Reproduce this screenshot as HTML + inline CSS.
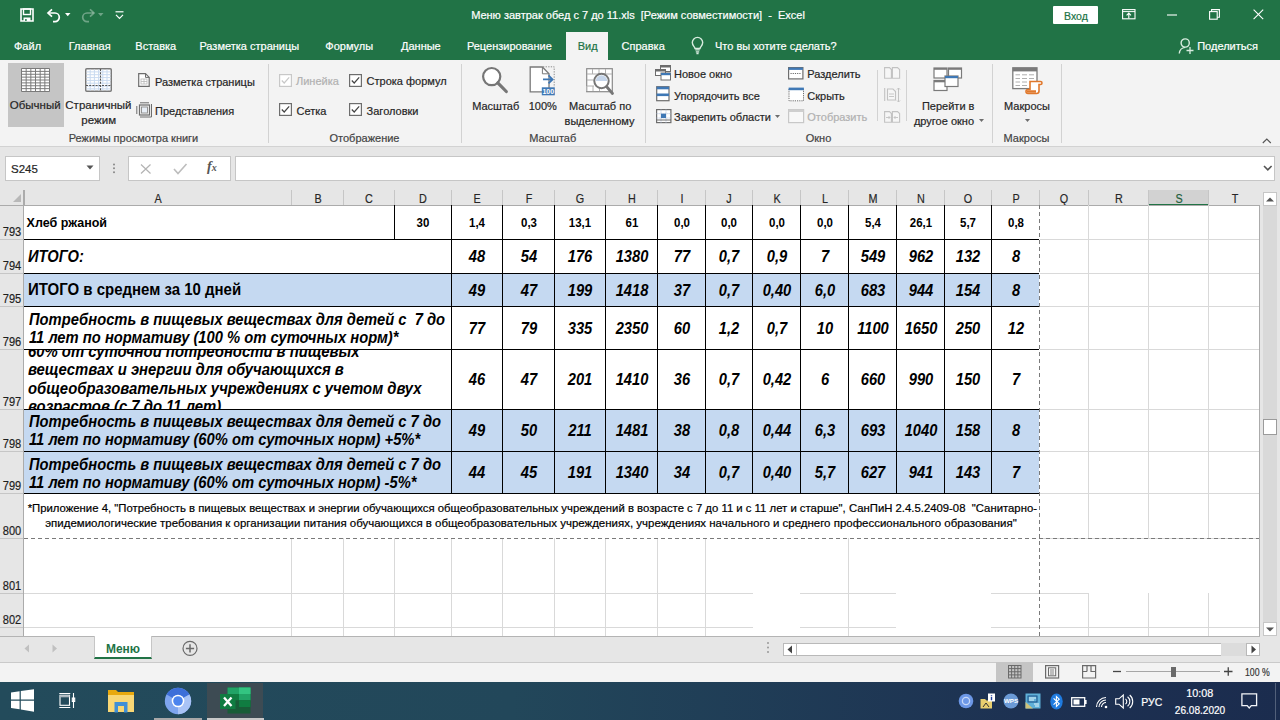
<!DOCTYPE html><html><head><meta charset="utf-8"><style>
html,body{margin:0;padding:0;width:1280px;height:720px;overflow:hidden;background:#fff;font-family:"Liberation Sans",sans-serif;}
div{box-sizing:border-box;}
.t{-webkit-text-stroke:0.2px currentColor}
.b{-webkit-text-stroke:0}
svg{position:absolute;overflow:visible}
</style></head><body>
<div style="position:absolute;left:0px;top:0px;width:1280px;height:60px;background:#217346"></div>
<div class="t" style="position:absolute;left:338px;width:600px;text-align:center;top:10.49px;font-size:11px;line-height:11px;color:#fff;font-weight:normal;font-style:normal;white-space:pre;">Меню завтрак обед с 7 до 11.xls  [Режим совместимости]  -  Excel</div>
<div class="t" style="position:absolute;left:14px;top:40.99px;font-size:11px;line-height:11px;color:#fff;font-weight:normal;font-style:normal;white-space:pre;">Файл</div>
<div class="t" style="position:absolute;left:68.75px;top:40.99px;font-size:11px;line-height:11px;color:#fff;font-weight:normal;font-style:normal;white-space:pre;">Главная</div>
<div class="t" style="position:absolute;left:135.3px;top:40.99px;font-size:11px;line-height:11px;color:#fff;font-weight:normal;font-style:normal;white-space:pre;">Вставка</div>
<div class="t" style="position:absolute;left:199.4px;top:40.99px;font-size:11px;line-height:11px;color:#fff;font-weight:normal;font-style:normal;white-space:pre;">Разметка страницы</div>
<div class="t" style="position:absolute;left:325.3px;top:40.99px;font-size:11px;line-height:11px;color:#fff;font-weight:normal;font-style:normal;white-space:pre;">Формулы</div>
<div class="t" style="position:absolute;left:401px;top:40.99px;font-size:11px;line-height:11px;color:#fff;font-weight:normal;font-style:normal;white-space:pre;">Данные</div>
<div class="t" style="position:absolute;left:466.9px;top:40.99px;font-size:11px;line-height:11px;color:#fff;font-weight:normal;font-style:normal;white-space:pre;">Рецензирование</div>
<div class="t" style="position:absolute;left:621.6px;top:40.99px;font-size:11px;line-height:11px;color:#fff;font-weight:normal;font-style:normal;white-space:pre;">Справка</div>
<div class="t" style="position:absolute;left:715px;top:40.99px;font-size:11px;line-height:11px;color:#fff;font-weight:normal;font-style:normal;white-space:pre;">Что вы хотите сделать?</div>
<div style="position:absolute;left:566px;top:32px;width:42px;height:28px;background:#f3f3f3"></div>
<div class="t" style="position:absolute;left:577.7px;top:40.99px;font-size:11px;line-height:11px;color:#217346;font-weight:normal;font-style:normal;white-space:pre;">Вид</div>
<div class="t" style="position:absolute;left:1197.2px;top:40.99px;font-size:11px;line-height:11px;color:#fff;font-weight:normal;font-style:normal;white-space:pre;">Поделиться</div>
<div style="position:absolute;left:1053px;top:6px;width:45px;height:18px;background:#fff;border-radius:1px"></div>
<div class="t" style="position:absolute;left:1064px;top:10.91px;font-size:10.5px;line-height:10.5px;color:#217346;font-weight:normal;font-style:normal;white-space:pre;">Вход</div>
<div style="position:absolute;left:0px;top:60px;width:1280px;height:86px;background:#f3f3f3"></div>
<div style="position:absolute;left:0px;top:146px;width:1280px;height:1px;background:#d2d2d2"></div>
<div style="position:absolute;left:8px;top:63px;width:56px;height:64px;background:#c5c5c5"></div>
<div class="t" style="position:absolute;left:9.75px;top:100.47px;font-size:11.5px;line-height:11.5px;color:#262626;font-weight:normal;font-style:normal;white-space:pre;">Обычный</div>
<div class="t" style="position:absolute;left:-201.6px;width:600px;text-align:center;top:100.47px;font-size:11.5px;line-height:11.5px;color:#262626;font-weight:normal;font-style:normal;white-space:pre;">Страничный</div>
<div class="t" style="position:absolute;left:-201.3px;width:600px;text-align:center;top:115.47px;font-size:11.5px;line-height:11.5px;color:#262626;font-weight:normal;font-style:normal;white-space:pre;">режим</div>
<div class="t" style="position:absolute;left:155px;top:77.09px;font-size:11px;line-height:11px;color:#262626;font-weight:normal;font-style:normal;white-space:pre;">Разметка страницы</div>
<div class="t" style="position:absolute;left:155px;top:105.89px;font-size:11px;line-height:11px;color:#262626;font-weight:normal;font-style:normal;white-space:pre;">Представления</div>
<div class="t" style="position:absolute;left:-166.5px;width:600px;text-align:center;top:133.49px;font-size:11px;line-height:11px;color:#444;font-weight:normal;font-style:normal;white-space:pre;">Режимы просмотра книги</div>
<div style="position:absolute;left:268px;top:64px;width:1px;height:79px;background:#d2d2d2"></div>
<div class="t" style="position:absolute;left:296px;top:76.49px;font-size:11px;line-height:11px;color:#b1b1b1;font-weight:normal;font-style:normal;white-space:pre;">Линейка</div>
<div class="t" style="position:absolute;left:366.6px;top:76.49px;font-size:11px;line-height:11px;color:#262626;font-weight:normal;font-style:normal;white-space:pre;">Строка формул</div>
<div class="t" style="position:absolute;left:296.5px;top:105.89px;font-size:11px;line-height:11px;color:#262626;font-weight:normal;font-style:normal;white-space:pre;">Сетка</div>
<div class="t" style="position:absolute;left:366.6px;top:105.89px;font-size:11px;line-height:11px;color:#262626;font-weight:normal;font-style:normal;white-space:pre;">Заголовки</div>
<div class="t" style="position:absolute;left:64.5px;width:600px;text-align:center;top:133.49px;font-size:11px;line-height:11px;color:#444;font-weight:normal;font-style:normal;white-space:pre;">Отображение</div>
<div style="position:absolute;left:461px;top:64px;width:1px;height:79px;background:#d2d2d2"></div>
<div class="t" style="position:absolute;left:195.7px;width:600px;text-align:center;top:101.19px;font-size:11px;line-height:11px;color:#262626;font-weight:normal;font-style:normal;white-space:pre;">Масштаб</div>
<div class="t" style="position:absolute;left:242.79999999999995px;width:600px;text-align:center;top:101.19px;font-size:11px;line-height:11px;color:#262626;font-weight:normal;font-style:normal;white-space:pre;">100%</div>
<div class="t" style="position:absolute;left:300.20000000000005px;width:600px;text-align:center;top:101.19px;font-size:11px;line-height:11px;color:#262626;font-weight:normal;font-style:normal;white-space:pre;">Масштаб по</div>
<div class="t" style="position:absolute;left:299.5px;width:600px;text-align:center;top:115.89px;font-size:11px;line-height:11px;color:#262626;font-weight:normal;font-style:normal;white-space:pre;">выделенному</div>
<div class="t" style="position:absolute;left:252.70000000000005px;width:600px;text-align:center;top:133.49px;font-size:11px;line-height:11px;color:#444;font-weight:normal;font-style:normal;white-space:pre;">Масштаб</div>
<div style="position:absolute;left:645px;top:64px;width:1px;height:79px;background:#d2d2d2"></div>
<div class="t" style="position:absolute;left:674px;top:69.29px;font-size:11px;line-height:11px;color:#262626;font-weight:normal;font-style:normal;white-space:pre;">Новое окно</div>
<div class="t" style="position:absolute;left:674px;top:90.89px;font-size:11px;line-height:11px;color:#262626;font-weight:normal;font-style:normal;white-space:pre;">Упорядочить все</div>
<div class="t" style="position:absolute;left:674px;top:112.49px;font-size:11px;line-height:11px;color:#262626;font-weight:normal;font-style:normal;white-space:pre;">Закрепить области</div>
<div class="t" style="position:absolute;left:807.3px;top:69.29px;font-size:11px;line-height:11px;color:#262626;font-weight:normal;font-style:normal;white-space:pre;">Разделить</div>
<div class="t" style="position:absolute;left:807.3px;top:90.89px;font-size:11px;line-height:11px;color:#262626;font-weight:normal;font-style:normal;white-space:pre;">Скрыть</div>
<div class="t" style="position:absolute;left:807.3px;top:112.49px;font-size:11px;line-height:11px;color:#b1b1b1;font-weight:normal;font-style:normal;white-space:pre;">Отобразить</div>
<div class="t" style="position:absolute;left:518.5px;width:600px;text-align:center;top:133.49px;font-size:11px;line-height:11px;color:#444;font-weight:normal;font-style:normal;white-space:pre;">Окно</div>
<div style="position:absolute;left:877px;top:70px;width:1px;height:51px;background:#d2d2d2"></div>
<div style="position:absolute;left:906px;top:70px;width:1px;height:51px;background:#d2d2d2"></div>
<div class="t" style="position:absolute;left:648.2px;width:600px;text-align:center;top:101.19px;font-size:11px;line-height:11px;color:#262626;font-weight:normal;font-style:normal;white-space:pre;">Перейти в</div>
<div class="t" style="position:absolute;left:644px;width:600px;text-align:center;top:115.89px;font-size:11px;line-height:11px;color:#262626;font-weight:normal;font-style:normal;white-space:pre;">другое окно</div>
<div style="position:absolute;left:992px;top:64px;width:1px;height:79px;background:#d2d2d2"></div>
<div class="t" style="position:absolute;left:727px;width:600px;text-align:center;top:101.19px;font-size:11px;line-height:11px;color:#262626;font-weight:normal;font-style:normal;white-space:pre;">Макросы</div>
<div class="t" style="position:absolute;left:726.5px;width:600px;text-align:center;top:133.49px;font-size:11px;line-height:11px;color:#444;font-weight:normal;font-style:normal;white-space:pre;">Макросы</div>
<div style="position:absolute;left:1061px;top:64px;width:1px;height:79px;background:#d2d2d2"></div>
<div style="position:absolute;left:0px;top:147px;width:1280px;height:43px;background:#e6e6e6"></div>
<div style="position:absolute;left:5px;top:156px;width:95px;height:25px;background:#fff;border:1px solid #c6c6c6"></div>
<div class="t" style="position:absolute;left:11px;top:163.87px;font-size:11.5px;line-height:11.5px;color:#262626;font-weight:normal;font-style:normal;white-space:pre;">S245</div>
<div style="position:absolute;left:128px;top:156px;width:103px;height:25px;background:#fff;border:1px solid #c6c6c6"></div>
<div style="position:absolute;left:235px;top:156px;width:1040px;height:25px;background:#fff;border:1px solid #c6c6c6"></div>
<div style="position:absolute;left:0px;top:190px;width:1260px;height:15px;background:#e6e6e6"></div>
<div style="position:absolute;left:0px;top:205px;width:24px;height:431px;background:#e6e6e6"></div>
<div style="position:absolute;left:24px;top:205px;width:1236px;height:431px;background:#fff"></div>
<div class="t" style="position:absolute;left:-142.0px;width:600px;text-align:center;top:191.97px;font-size:13.5px;line-height:13.5px;color:#262626;font-weight:normal;font-style:normal;white-space:pre;;transform:scaleX(0.8);transform-origin:50% 0">A</div>
<div class="t" style="position:absolute;left:17.5px;width:600px;text-align:center;top:191.97px;font-size:13.5px;line-height:13.5px;color:#262626;font-weight:normal;font-style:normal;white-space:pre;;transform:scaleX(0.8);transform-origin:50% 0">B</div>
<div class="t" style="position:absolute;left:69.0px;width:600px;text-align:center;top:191.97px;font-size:13.5px;line-height:13.5px;color:#262626;font-weight:normal;font-style:normal;white-space:pre;;transform:scaleX(0.8);transform-origin:50% 0">C</div>
<div class="t" style="position:absolute;left:123.0px;width:600px;text-align:center;top:191.97px;font-size:13.5px;line-height:13.5px;color:#262626;font-weight:normal;font-style:normal;white-space:pre;;transform:scaleX(0.8);transform-origin:50% 0">D</div>
<div class="t" style="position:absolute;left:177.0px;width:600px;text-align:center;top:191.97px;font-size:13.5px;line-height:13.5px;color:#262626;font-weight:normal;font-style:normal;white-space:pre;;transform:scaleX(0.8);transform-origin:50% 0">E</div>
<div class="t" style="position:absolute;left:228.5px;width:600px;text-align:center;top:191.97px;font-size:13.5px;line-height:13.5px;color:#262626;font-weight:normal;font-style:normal;white-space:pre;;transform:scaleX(0.8);transform-origin:50% 0">F</div>
<div class="t" style="position:absolute;left:280.0px;width:600px;text-align:center;top:191.97px;font-size:13.5px;line-height:13.5px;color:#262626;font-weight:normal;font-style:normal;white-space:pre;;transform:scaleX(0.8);transform-origin:50% 0">G</div>
<div class="t" style="position:absolute;left:331.5px;width:600px;text-align:center;top:191.97px;font-size:13.5px;line-height:13.5px;color:#262626;font-weight:normal;font-style:normal;white-space:pre;;transform:scaleX(0.8);transform-origin:50% 0">H</div>
<div class="t" style="position:absolute;left:381.5px;width:600px;text-align:center;top:191.97px;font-size:13.5px;line-height:13.5px;color:#262626;font-weight:normal;font-style:normal;white-space:pre;;transform:scaleX(0.8);transform-origin:50% 0">I</div>
<div class="t" style="position:absolute;left:429.0px;width:600px;text-align:center;top:191.97px;font-size:13.5px;line-height:13.5px;color:#262626;font-weight:normal;font-style:normal;white-space:pre;;transform:scaleX(0.8);transform-origin:50% 0">J</div>
<div class="t" style="position:absolute;left:476.5px;width:600px;text-align:center;top:191.97px;font-size:13.5px;line-height:13.5px;color:#262626;font-weight:normal;font-style:normal;white-space:pre;;transform:scaleX(0.8);transform-origin:50% 0">K</div>
<div class="t" style="position:absolute;left:524.5px;width:600px;text-align:center;top:191.97px;font-size:13.5px;line-height:13.5px;color:#262626;font-weight:normal;font-style:normal;white-space:pre;;transform:scaleX(0.8);transform-origin:50% 0">L</div>
<div class="t" style="position:absolute;left:572.5px;width:600px;text-align:center;top:191.97px;font-size:13.5px;line-height:13.5px;color:#262626;font-weight:normal;font-style:normal;white-space:pre;;transform:scaleX(0.8);transform-origin:50% 0">M</div>
<div class="t" style="position:absolute;left:620.5px;width:600px;text-align:center;top:191.97px;font-size:13.5px;line-height:13.5px;color:#262626;font-weight:normal;font-style:normal;white-space:pre;;transform:scaleX(0.8);transform-origin:50% 0">N</div>
<div class="t" style="position:absolute;left:668.0px;width:600px;text-align:center;top:191.97px;font-size:13.5px;line-height:13.5px;color:#262626;font-weight:normal;font-style:normal;white-space:pre;;transform:scaleX(0.8);transform-origin:50% 0">O</div>
<div class="t" style="position:absolute;left:715.5px;width:600px;text-align:center;top:191.97px;font-size:13.5px;line-height:13.5px;color:#262626;font-weight:normal;font-style:normal;white-space:pre;;transform:scaleX(0.8);transform-origin:50% 0">P</div>
<div class="t" style="position:absolute;left:764.0px;width:600px;text-align:center;top:191.97px;font-size:13.5px;line-height:13.5px;color:#262626;font-weight:normal;font-style:normal;white-space:pre;;transform:scaleX(0.8);transform-origin:50% 0">Q</div>
<div class="t" style="position:absolute;left:818.5px;width:600px;text-align:center;top:191.97px;font-size:13.5px;line-height:13.5px;color:#262626;font-weight:normal;font-style:normal;white-space:pre;;transform:scaleX(0.8);transform-origin:50% 0">R</div>
<div style="position:absolute;left:1149px;top:190px;width:59px;height:15px;background:#d2d2d2"></div>
<div style="position:absolute;left:1149px;top:204px;width:59px;height:2px;background:#217346"></div>
<div class="t" style="position:absolute;left:878.5px;width:600px;text-align:center;top:191.97px;font-size:13.5px;line-height:13.5px;color:#1e5e3b;font-weight:normal;font-style:normal;white-space:pre;;transform:scaleX(0.8);transform-origin:50% 0">S</div>
<div class="t" style="position:absolute;left:934.5px;width:600px;text-align:center;top:191.97px;font-size:13.5px;line-height:13.5px;color:#262626;font-weight:normal;font-style:normal;white-space:pre;;transform:scaleX(0.8);transform-origin:50% 0">T</div>
<div style="position:absolute;left:24px;top:190px;width:1px;height:15px;background:#c6c6c6"></div>
<div style="position:absolute;left:291px;top:190px;width:1px;height:15px;background:#c6c6c6"></div>
<div style="position:absolute;left:343px;top:190px;width:1px;height:15px;background:#c6c6c6"></div>
<div style="position:absolute;left:394px;top:190px;width:1px;height:15px;background:#c6c6c6"></div>
<div style="position:absolute;left:451px;top:190px;width:1px;height:15px;background:#c6c6c6"></div>
<div style="position:absolute;left:502px;top:190px;width:1px;height:15px;background:#c6c6c6"></div>
<div style="position:absolute;left:554px;top:190px;width:1px;height:15px;background:#c6c6c6"></div>
<div style="position:absolute;left:605px;top:190px;width:1px;height:15px;background:#c6c6c6"></div>
<div style="position:absolute;left:657px;top:190px;width:1px;height:15px;background:#c6c6c6"></div>
<div style="position:absolute;left:705px;top:190px;width:1px;height:15px;background:#c6c6c6"></div>
<div style="position:absolute;left:752px;top:190px;width:1px;height:15px;background:#c6c6c6"></div>
<div style="position:absolute;left:800px;top:190px;width:1px;height:15px;background:#c6c6c6"></div>
<div style="position:absolute;left:848px;top:190px;width:1px;height:15px;background:#c6c6c6"></div>
<div style="position:absolute;left:896px;top:190px;width:1px;height:15px;background:#c6c6c6"></div>
<div style="position:absolute;left:944px;top:190px;width:1px;height:15px;background:#c6c6c6"></div>
<div style="position:absolute;left:991px;top:190px;width:1px;height:15px;background:#c6c6c6"></div>
<div style="position:absolute;left:1039px;top:190px;width:1px;height:15px;background:#c6c6c6"></div>
<div style="position:absolute;left:1088px;top:190px;width:1px;height:15px;background:#c6c6c6"></div>
<div style="position:absolute;left:1148px;top:190px;width:1px;height:15px;background:#c6c6c6"></div>
<div style="position:absolute;left:1208px;top:190px;width:1px;height:15px;background:#c6c6c6"></div>
<div style="position:absolute;left:24px;top:190px;width:1px;height:15px;background:#ababab"></div>
<div style="position:absolute;left:0px;top:205px;width:1260px;height:1px;background:#ababab"></div>
<div style="position:absolute;left:23px;top:190px;width:1px;height:446px;background:#ababab"></div>
<div class="t" style="position:absolute;left:-288px;width:600px;text-align:center;top:224.60px;font-size:13px;line-height:13px;color:#1e1e1e;font-weight:normal;font-style:normal;white-space:pre;;transform:scaleX(0.85);transform-origin:50% 0">793</div>
<div style="position:absolute;left:0px;top:239px;width:23px;height:1px;background:#c6c6c6"></div>
<div class="t" style="position:absolute;left:-288px;width:600px;text-align:center;top:258.60px;font-size:13px;line-height:13px;color:#1e1e1e;font-weight:normal;font-style:normal;white-space:pre;;transform:scaleX(0.85);transform-origin:50% 0">794</div>
<div style="position:absolute;left:0px;top:273px;width:23px;height:1px;background:#c6c6c6"></div>
<div class="t" style="position:absolute;left:-288px;width:600px;text-align:center;top:291.60px;font-size:13px;line-height:13px;color:#1e1e1e;font-weight:normal;font-style:normal;white-space:pre;;transform:scaleX(0.85);transform-origin:50% 0">795</div>
<div style="position:absolute;left:0px;top:306px;width:23px;height:1px;background:#c6c6c6"></div>
<div class="t" style="position:absolute;left:-288px;width:600px;text-align:center;top:334.60px;font-size:13px;line-height:13px;color:#1e1e1e;font-weight:normal;font-style:normal;white-space:pre;;transform:scaleX(0.85);transform-origin:50% 0">796</div>
<div style="position:absolute;left:0px;top:349px;width:23px;height:1px;background:#c6c6c6"></div>
<div class="t" style="position:absolute;left:-288px;width:600px;text-align:center;top:394.60px;font-size:13px;line-height:13px;color:#1e1e1e;font-weight:normal;font-style:normal;white-space:pre;;transform:scaleX(0.85);transform-origin:50% 0">797</div>
<div style="position:absolute;left:0px;top:409px;width:23px;height:1px;background:#c6c6c6"></div>
<div class="t" style="position:absolute;left:-288px;width:600px;text-align:center;top:436.60px;font-size:13px;line-height:13px;color:#1e1e1e;font-weight:normal;font-style:normal;white-space:pre;;transform:scaleX(0.85);transform-origin:50% 0">798</div>
<div style="position:absolute;left:0px;top:451px;width:23px;height:1px;background:#c6c6c6"></div>
<div class="t" style="position:absolute;left:-288px;width:600px;text-align:center;top:478.60px;font-size:13px;line-height:13px;color:#1e1e1e;font-weight:normal;font-style:normal;white-space:pre;;transform:scaleX(0.85);transform-origin:50% 0">799</div>
<div style="position:absolute;left:0px;top:493px;width:23px;height:1px;background:#c6c6c6"></div>
<div class="t" style="position:absolute;left:-288px;width:600px;text-align:center;top:523.60px;font-size:13px;line-height:13px;color:#1e1e1e;font-weight:normal;font-style:normal;white-space:pre;;transform:scaleX(0.85);transform-origin:50% 0">800</div>
<div style="position:absolute;left:0px;top:538px;width:23px;height:1px;background:#c6c6c6"></div>
<div class="t" style="position:absolute;left:-288px;width:600px;text-align:center;top:578.60px;font-size:13px;line-height:13px;color:#1e1e1e;font-weight:normal;font-style:normal;white-space:pre;;transform:scaleX(0.85);transform-origin:50% 0">801</div>
<div style="position:absolute;left:0px;top:593px;width:23px;height:1px;background:#c6c6c6"></div>
<div class="t" style="position:absolute;left:-288px;width:600px;text-align:center;top:612.60px;font-size:13px;line-height:13px;color:#1e1e1e;font-weight:normal;font-style:normal;white-space:pre;;transform:scaleX(0.85);transform-origin:50% 0">802</div>
<div style="position:absolute;left:0px;top:627px;width:23px;height:1px;background:#c6c6c6"></div>
<div style="position:absolute;left:24px;top:274px;width:1015px;height:32px;background:#c5d9f1"></div>
<div style="position:absolute;left:24px;top:410px;width:1015px;height:41px;background:#c5d9f1"></div>
<div style="position:absolute;left:24px;top:452px;width:1015px;height:41px;background:#c5d9f1"></div>
<div style="position:absolute;left:1088px;top:205px;width:1px;height:333px;background:#d9d9d9"></div>
<div style="position:absolute;left:1148px;top:205px;width:1px;height:333px;background:#d9d9d9"></div>
<div style="position:absolute;left:1208px;top:205px;width:1px;height:333px;background:#d9d9d9"></div>
<div style="position:absolute;left:1040px;top:239px;width:220px;height:1px;background:#d9d9d9"></div>
<div style="position:absolute;left:1040px;top:273px;width:220px;height:1px;background:#d9d9d9"></div>
<div style="position:absolute;left:1040px;top:306px;width:220px;height:1px;background:#d9d9d9"></div>
<div style="position:absolute;left:1040px;top:349px;width:220px;height:1px;background:#d9d9d9"></div>
<div style="position:absolute;left:1040px;top:409px;width:220px;height:1px;background:#d9d9d9"></div>
<div style="position:absolute;left:1040px;top:451px;width:220px;height:1px;background:#d9d9d9"></div>
<div style="position:absolute;left:1040px;top:493px;width:220px;height:1px;background:#d9d9d9"></div>
<div style="position:absolute;left:1040px;top:538px;width:220px;height:1px;background:#d9d9d9"></div>
<div style="position:absolute;left:291px;top:538px;width:1px;height:98px;background:#d9d9d9"></div>
<div style="position:absolute;left:343px;top:538px;width:1px;height:98px;background:#d9d9d9"></div>
<div style="position:absolute;left:394px;top:538px;width:1px;height:98px;background:#d9d9d9"></div>
<div style="position:absolute;left:451px;top:538px;width:1px;height:98px;background:#d9d9d9"></div>
<div style="position:absolute;left:502px;top:538px;width:1px;height:98px;background:#d9d9d9"></div>
<div style="position:absolute;left:554px;top:538px;width:1px;height:98px;background:#d9d9d9"></div>
<div style="position:absolute;left:605px;top:538px;width:1px;height:98px;background:#d9d9d9"></div>
<div style="position:absolute;left:657px;top:538px;width:1px;height:98px;background:#d9d9d9"></div>
<div style="position:absolute;left:705px;top:538px;width:1px;height:98px;background:#d9d9d9"></div>
<div style="position:absolute;left:848px;top:538px;width:1px;height:98px;background:#d9d9d9"></div>
<div style="position:absolute;left:1088px;top:593px;width:1px;height:43px;background:#d9d9d9"></div>
<div style="position:absolute;left:1148px;top:593px;width:1px;height:43px;background:#d9d9d9"></div>
<div style="position:absolute;left:1208px;top:593px;width:1px;height:43px;background:#d9d9d9"></div>
<div style="position:absolute;left:24px;top:593px;width:729px;height:1px;background:#d9d9d9"></div>
<div style="position:absolute;left:800px;top:593px;width:96px;height:1px;background:#d9d9d9"></div>
<div style="position:absolute;left:24px;top:627px;width:729px;height:1px;background:#d9d9d9"></div>
<div style="position:absolute;left:800px;top:627px;width:96px;height:1px;background:#d9d9d9"></div>
<div style="position:absolute;left:991px;top:593px;width:97px;height:1px;background:#d9d9d9"></div>
<div style="position:absolute;left:991px;top:627px;width:269px;height:1px;background:#d9d9d9"></div>
<div style="position:absolute;left:394px;top:205px;width:1px;height:34px;background:#000"></div>
<div style="position:absolute;left:451px;top:205px;width:1px;height:34px;background:#000"></div>
<div style="position:absolute;left:502px;top:205px;width:1px;height:34px;background:#000"></div>
<div style="position:absolute;left:554px;top:205px;width:1px;height:34px;background:#000"></div>
<div style="position:absolute;left:605px;top:205px;width:1px;height:34px;background:#000"></div>
<div style="position:absolute;left:657px;top:205px;width:1px;height:34px;background:#000"></div>
<div style="position:absolute;left:705px;top:205px;width:1px;height:34px;background:#000"></div>
<div style="position:absolute;left:752px;top:205px;width:1px;height:34px;background:#000"></div>
<div style="position:absolute;left:800px;top:205px;width:1px;height:34px;background:#000"></div>
<div style="position:absolute;left:848px;top:205px;width:1px;height:34px;background:#000"></div>
<div style="position:absolute;left:896px;top:205px;width:1px;height:34px;background:#000"></div>
<div style="position:absolute;left:944px;top:205px;width:1px;height:34px;background:#000"></div>
<div style="position:absolute;left:991px;top:205px;width:1px;height:34px;background:#000"></div>
<div style="position:absolute;left:451px;top:239px;width:1px;height:254px;background:#000"></div>
<div style="position:absolute;left:502px;top:239px;width:1px;height:254px;background:#000"></div>
<div style="position:absolute;left:554px;top:239px;width:1px;height:254px;background:#000"></div>
<div style="position:absolute;left:605px;top:239px;width:1px;height:254px;background:#000"></div>
<div style="position:absolute;left:657px;top:239px;width:1px;height:254px;background:#000"></div>
<div style="position:absolute;left:705px;top:239px;width:1px;height:254px;background:#000"></div>
<div style="position:absolute;left:752px;top:239px;width:1px;height:254px;background:#000"></div>
<div style="position:absolute;left:800px;top:239px;width:1px;height:254px;background:#000"></div>
<div style="position:absolute;left:848px;top:239px;width:1px;height:254px;background:#000"></div>
<div style="position:absolute;left:896px;top:239px;width:1px;height:254px;background:#000"></div>
<div style="position:absolute;left:944px;top:239px;width:1px;height:254px;background:#000"></div>
<div style="position:absolute;left:991px;top:239px;width:1px;height:254px;background:#000"></div>
<div style="position:absolute;left:24px;top:239px;width:1015px;height:1px;background:#000"></div>
<div style="position:absolute;left:24px;top:273px;width:1015px;height:1px;background:#000"></div>
<div style="position:absolute;left:24px;top:306px;width:1015px;height:1px;background:#000"></div>
<div style="position:absolute;left:24px;top:349px;width:1015px;height:1px;background:#000"></div>
<div style="position:absolute;left:24px;top:409px;width:1015px;height:1px;background:#000"></div>
<div style="position:absolute;left:24px;top:451px;width:1015px;height:1px;background:#000"></div>
<div style="position:absolute;left:24px;top:493px;width:1015px;height:1px;background:#000"></div>
<svg style="left:0;top:0" width="1280" height="720"><line x1="1039.5" y1="205" x2="1039.5" y2="636" stroke="#7a7a7a" stroke-width="1" stroke-dasharray="4 3"/><line x1="24" y1="538.5" x2="1260" y2="538.5" stroke="#7a7a7a" stroke-width="1" stroke-dasharray="4 3"/></svg>
<div class="b" style="position:absolute;left:26.6px;top:217.32px;font-size:12.5px;line-height:12.5px;color:#000;font-weight:bold;font-style:normal;white-space:pre;">Хлеб ржаной</div>
<div class="b" style="position:absolute;left:27.9px;top:248.89px;font-size:15.6px;line-height:15.6px;color:#000;font-weight:bold;font-style:italic;white-space:pre;;transform:scaleX(0.942);transform-origin:0 0">ИТОГО:</div>
<div class="b" style="position:absolute;left:27.5px;top:282.34px;font-size:15.9px;line-height:15.9px;color:#000;font-weight:bold;font-style:normal;white-space:pre;;transform:scaleX(0.943);transform-origin:0 0">ИТОГО в среднем за 10 дней</div>
<div class="b" style="position:absolute;left:28.6px;top:312.05px;font-size:15.65px;line-height:15.65px;color:#000;font-weight:bold;font-style:italic;white-space:pre;;transform:scaleX(0.9425);transform-origin:0 0">Потребность в пищевых веществах для детей с  7 до</div>
<div class="b" style="position:absolute;left:28.6px;top:329.85px;font-size:15.65px;line-height:15.65px;color:#000;font-weight:bold;font-style:italic;white-space:pre;;transform:scaleX(0.9425);transform-origin:0 0">11 лет по нормативу (100 % от суточных норм)*</div>
<div style="position:absolute;left:24px;top:350px;width:427px;height:59px;overflow:hidden">
<div style="position:absolute;left:3.6px;top:-6.13px;font-size:15.75px;line-height:15.75px;font-weight:bold;font-style:italic;color:#000;white-space:pre;transform:scaleX(0.943);transform-origin:0 0">60% от суточной потребности в пищевых</div>
<div style="position:absolute;left:3.6px;top:12.37px;font-size:15.75px;line-height:15.75px;font-weight:bold;font-style:italic;color:#000;white-space:pre;transform:scaleX(0.943);transform-origin:0 0">веществах и энергии для обучающихся в</div>
<div style="position:absolute;left:3.6px;top:30.87px;font-size:15.75px;line-height:15.75px;font-weight:bold;font-style:italic;color:#000;white-space:pre;transform:scaleX(0.943);transform-origin:0 0">общеобразовательных учреждениях с учетом двух</div>
<div style="position:absolute;left:3.6px;top:49.37px;font-size:15.75px;line-height:15.75px;font-weight:bold;font-style:italic;color:#000;white-space:pre;transform:scaleX(0.943);transform-origin:0 0">возрастов (с 7 до 11 лет)</div>
</div>
<div class="b" style="position:absolute;left:28.6px;top:413.85px;font-size:15.65px;line-height:15.65px;color:#000;font-weight:bold;font-style:italic;white-space:pre;;transform:scaleX(0.9425);transform-origin:0 0">Потребность в пищевых веществах для детей с 7 до</div>
<div class="b" style="position:absolute;left:28.6px;top:432.25px;font-size:15.65px;line-height:15.65px;color:#000;font-weight:bold;font-style:italic;white-space:pre;;transform:scaleX(0.9425);transform-origin:0 0">11 лет по нормативу (60% от суточных норм) +5%*</div>
<div class="b" style="position:absolute;left:28.6px;top:456.75px;font-size:15.65px;line-height:15.65px;color:#000;font-weight:bold;font-style:italic;white-space:pre;;transform:scaleX(0.9425);transform-origin:0 0">Потребность в пищевых веществах для детей с 7 до</div>
<div class="b" style="position:absolute;left:28.6px;top:475.25px;font-size:15.65px;line-height:15.65px;color:#000;font-weight:bold;font-style:italic;white-space:pre;;transform:scaleX(0.9425);transform-origin:0 0">11 лет по нормативу (60% от суточных норм) -5%*</div>
<div class="t" style="position:absolute;left:232.29999999999995px;width:600px;text-align:center;top:502.50px;font-size:11.34px;line-height:11.34px;color:#000;font-weight:normal;font-style:normal;white-space:pre;width:1200px;left:-67.7px">*Приложение 4, "Потребность в пищевых веществах и энергии обучающихся общеобразовательных учреждений в возрасте с 7 до 11 и с 11 лет и старше", СанПиН 2.4.5.2409-08  "Санитарно-</div>
<div class="t" style="position:absolute;left:231px;width:600px;text-align:center;top:517.79px;font-size:11.47px;line-height:11.47px;color:#000;font-weight:normal;font-style:normal;white-space:pre;width:1200px;left:-69px">эпидемиологические требования к организации питания обучающихся в общеобразовательных учреждениях, учреждениях начального и среднего профессионального образования"</div>
<div class="b" style="position:absolute;left:123.0px;width:600px;text-align:center;top:216.37px;font-size:13.5px;line-height:13.5px;color:#000;font-weight:bold;font-style:normal;white-space:pre;;transform:scaleX(0.85);transform-origin:50% 0">30</div>
<div class="b" style="position:absolute;left:177.0px;width:600px;text-align:center;top:216.37px;font-size:13.5px;line-height:13.5px;color:#000;font-weight:bold;font-style:normal;white-space:pre;;transform:scaleX(0.85);transform-origin:50% 0">1,4</div>
<div class="b" style="position:absolute;left:228.5px;width:600px;text-align:center;top:216.37px;font-size:13.5px;line-height:13.5px;color:#000;font-weight:bold;font-style:normal;white-space:pre;;transform:scaleX(0.85);transform-origin:50% 0">0,3</div>
<div class="b" style="position:absolute;left:280.0px;width:600px;text-align:center;top:216.37px;font-size:13.5px;line-height:13.5px;color:#000;font-weight:bold;font-style:normal;white-space:pre;;transform:scaleX(0.85);transform-origin:50% 0">13,1</div>
<div class="b" style="position:absolute;left:331.5px;width:600px;text-align:center;top:216.37px;font-size:13.5px;line-height:13.5px;color:#000;font-weight:bold;font-style:normal;white-space:pre;;transform:scaleX(0.85);transform-origin:50% 0">61</div>
<div class="b" style="position:absolute;left:381.5px;width:600px;text-align:center;top:216.37px;font-size:13.5px;line-height:13.5px;color:#000;font-weight:bold;font-style:normal;white-space:pre;;transform:scaleX(0.85);transform-origin:50% 0">0,0</div>
<div class="b" style="position:absolute;left:429.0px;width:600px;text-align:center;top:216.37px;font-size:13.5px;line-height:13.5px;color:#000;font-weight:bold;font-style:normal;white-space:pre;;transform:scaleX(0.85);transform-origin:50% 0">0,0</div>
<div class="b" style="position:absolute;left:476.5px;width:600px;text-align:center;top:216.37px;font-size:13.5px;line-height:13.5px;color:#000;font-weight:bold;font-style:normal;white-space:pre;;transform:scaleX(0.85);transform-origin:50% 0">0,0</div>
<div class="b" style="position:absolute;left:524.5px;width:600px;text-align:center;top:216.37px;font-size:13.5px;line-height:13.5px;color:#000;font-weight:bold;font-style:normal;white-space:pre;;transform:scaleX(0.85);transform-origin:50% 0">0,0</div>
<div class="b" style="position:absolute;left:572.5px;width:600px;text-align:center;top:216.37px;font-size:13.5px;line-height:13.5px;color:#000;font-weight:bold;font-style:normal;white-space:pre;;transform:scaleX(0.85);transform-origin:50% 0">5,4</div>
<div class="b" style="position:absolute;left:620.5px;width:600px;text-align:center;top:216.37px;font-size:13.5px;line-height:13.5px;color:#000;font-weight:bold;font-style:normal;white-space:pre;;transform:scaleX(0.85);transform-origin:50% 0">26,1</div>
<div class="b" style="position:absolute;left:668.0px;width:600px;text-align:center;top:216.37px;font-size:13.5px;line-height:13.5px;color:#000;font-weight:bold;font-style:normal;white-space:pre;;transform:scaleX(0.85);transform-origin:50% 0">5,7</div>
<div class="b" style="position:absolute;left:715.5px;width:600px;text-align:center;top:216.37px;font-size:13.5px;line-height:13.5px;color:#000;font-weight:bold;font-style:normal;white-space:pre;;transform:scaleX(0.85);transform-origin:50% 0">0,8</div>
<div class="b" style="position:absolute;left:177.0px;width:600px;text-align:center;top:248.99px;font-size:15.6px;line-height:15.6px;color:#000;font-weight:bold;font-style:italic;white-space:pre;;transform:scaleX(0.942);transform-origin:50% 0">48</div>
<div class="b" style="position:absolute;left:228.5px;width:600px;text-align:center;top:248.99px;font-size:15.6px;line-height:15.6px;color:#000;font-weight:bold;font-style:italic;white-space:pre;;transform:scaleX(0.942);transform-origin:50% 0">54</div>
<div class="b" style="position:absolute;left:280.0px;width:600px;text-align:center;top:248.99px;font-size:15.6px;line-height:15.6px;color:#000;font-weight:bold;font-style:italic;white-space:pre;;transform:scaleX(0.942);transform-origin:50% 0">176</div>
<div class="b" style="position:absolute;left:331.5px;width:600px;text-align:center;top:248.99px;font-size:15.6px;line-height:15.6px;color:#000;font-weight:bold;font-style:italic;white-space:pre;;transform:scaleX(0.942);transform-origin:50% 0">1380</div>
<div class="b" style="position:absolute;left:381.5px;width:600px;text-align:center;top:248.99px;font-size:15.6px;line-height:15.6px;color:#000;font-weight:bold;font-style:italic;white-space:pre;;transform:scaleX(0.942);transform-origin:50% 0">77</div>
<div class="b" style="position:absolute;left:429.0px;width:600px;text-align:center;top:248.99px;font-size:15.6px;line-height:15.6px;color:#000;font-weight:bold;font-style:italic;white-space:pre;;transform:scaleX(0.942);transform-origin:50% 0">0,7</div>
<div class="b" style="position:absolute;left:476.5px;width:600px;text-align:center;top:248.99px;font-size:15.6px;line-height:15.6px;color:#000;font-weight:bold;font-style:italic;white-space:pre;;transform:scaleX(0.942);transform-origin:50% 0">0,9</div>
<div class="b" style="position:absolute;left:524.5px;width:600px;text-align:center;top:248.99px;font-size:15.6px;line-height:15.6px;color:#000;font-weight:bold;font-style:italic;white-space:pre;;transform:scaleX(0.942);transform-origin:50% 0">7</div>
<div class="b" style="position:absolute;left:572.5px;width:600px;text-align:center;top:248.99px;font-size:15.6px;line-height:15.6px;color:#000;font-weight:bold;font-style:italic;white-space:pre;;transform:scaleX(0.942);transform-origin:50% 0">549</div>
<div class="b" style="position:absolute;left:620.5px;width:600px;text-align:center;top:248.99px;font-size:15.6px;line-height:15.6px;color:#000;font-weight:bold;font-style:italic;white-space:pre;;transform:scaleX(0.942);transform-origin:50% 0">962</div>
<div class="b" style="position:absolute;left:668.0px;width:600px;text-align:center;top:248.99px;font-size:15.6px;line-height:15.6px;color:#000;font-weight:bold;font-style:italic;white-space:pre;;transform:scaleX(0.942);transform-origin:50% 0">132</div>
<div class="b" style="position:absolute;left:715.5px;width:600px;text-align:center;top:248.99px;font-size:15.6px;line-height:15.6px;color:#000;font-weight:bold;font-style:italic;white-space:pre;;transform:scaleX(0.942);transform-origin:50% 0">8</div>
<div class="b" style="position:absolute;left:177.0px;width:600px;text-align:center;top:282.59px;font-size:15.6px;line-height:15.6px;color:#000;font-weight:bold;font-style:italic;white-space:pre;;transform:scaleX(0.942);transform-origin:50% 0">49</div>
<div class="b" style="position:absolute;left:228.5px;width:600px;text-align:center;top:282.59px;font-size:15.6px;line-height:15.6px;color:#000;font-weight:bold;font-style:italic;white-space:pre;;transform:scaleX(0.942);transform-origin:50% 0">47</div>
<div class="b" style="position:absolute;left:280.0px;width:600px;text-align:center;top:282.59px;font-size:15.6px;line-height:15.6px;color:#000;font-weight:bold;font-style:italic;white-space:pre;;transform:scaleX(0.942);transform-origin:50% 0">199</div>
<div class="b" style="position:absolute;left:331.5px;width:600px;text-align:center;top:282.59px;font-size:15.6px;line-height:15.6px;color:#000;font-weight:bold;font-style:italic;white-space:pre;;transform:scaleX(0.942);transform-origin:50% 0">1418</div>
<div class="b" style="position:absolute;left:381.5px;width:600px;text-align:center;top:282.59px;font-size:15.6px;line-height:15.6px;color:#000;font-weight:bold;font-style:italic;white-space:pre;;transform:scaleX(0.942);transform-origin:50% 0">37</div>
<div class="b" style="position:absolute;left:429.0px;width:600px;text-align:center;top:282.59px;font-size:15.6px;line-height:15.6px;color:#000;font-weight:bold;font-style:italic;white-space:pre;;transform:scaleX(0.942);transform-origin:50% 0">0,7</div>
<div class="b" style="position:absolute;left:476.5px;width:600px;text-align:center;top:282.59px;font-size:15.6px;line-height:15.6px;color:#000;font-weight:bold;font-style:italic;white-space:pre;;transform:scaleX(0.942);transform-origin:50% 0">0,40</div>
<div class="b" style="position:absolute;left:524.5px;width:600px;text-align:center;top:282.59px;font-size:15.6px;line-height:15.6px;color:#000;font-weight:bold;font-style:italic;white-space:pre;;transform:scaleX(0.942);transform-origin:50% 0">6,0</div>
<div class="b" style="position:absolute;left:572.5px;width:600px;text-align:center;top:282.59px;font-size:15.6px;line-height:15.6px;color:#000;font-weight:bold;font-style:italic;white-space:pre;;transform:scaleX(0.942);transform-origin:50% 0">683</div>
<div class="b" style="position:absolute;left:620.5px;width:600px;text-align:center;top:282.59px;font-size:15.6px;line-height:15.6px;color:#000;font-weight:bold;font-style:italic;white-space:pre;;transform:scaleX(0.942);transform-origin:50% 0">944</div>
<div class="b" style="position:absolute;left:668.0px;width:600px;text-align:center;top:282.59px;font-size:15.6px;line-height:15.6px;color:#000;font-weight:bold;font-style:italic;white-space:pre;;transform:scaleX(0.942);transform-origin:50% 0">154</div>
<div class="b" style="position:absolute;left:715.5px;width:600px;text-align:center;top:282.59px;font-size:15.6px;line-height:15.6px;color:#000;font-weight:bold;font-style:italic;white-space:pre;;transform:scaleX(0.942);transform-origin:50% 0">8</div>
<div class="b" style="position:absolute;left:177.0px;width:600px;text-align:center;top:320.59px;font-size:15.6px;line-height:15.6px;color:#000;font-weight:bold;font-style:italic;white-space:pre;;transform:scaleX(0.942);transform-origin:50% 0">77</div>
<div class="b" style="position:absolute;left:228.5px;width:600px;text-align:center;top:320.59px;font-size:15.6px;line-height:15.6px;color:#000;font-weight:bold;font-style:italic;white-space:pre;;transform:scaleX(0.942);transform-origin:50% 0">79</div>
<div class="b" style="position:absolute;left:280.0px;width:600px;text-align:center;top:320.59px;font-size:15.6px;line-height:15.6px;color:#000;font-weight:bold;font-style:italic;white-space:pre;;transform:scaleX(0.942);transform-origin:50% 0">335</div>
<div class="b" style="position:absolute;left:331.5px;width:600px;text-align:center;top:320.59px;font-size:15.6px;line-height:15.6px;color:#000;font-weight:bold;font-style:italic;white-space:pre;;transform:scaleX(0.942);transform-origin:50% 0">2350</div>
<div class="b" style="position:absolute;left:381.5px;width:600px;text-align:center;top:320.59px;font-size:15.6px;line-height:15.6px;color:#000;font-weight:bold;font-style:italic;white-space:pre;;transform:scaleX(0.942);transform-origin:50% 0">60</div>
<div class="b" style="position:absolute;left:429.0px;width:600px;text-align:center;top:320.59px;font-size:15.6px;line-height:15.6px;color:#000;font-weight:bold;font-style:italic;white-space:pre;;transform:scaleX(0.942);transform-origin:50% 0">1,2</div>
<div class="b" style="position:absolute;left:476.5px;width:600px;text-align:center;top:320.59px;font-size:15.6px;line-height:15.6px;color:#000;font-weight:bold;font-style:italic;white-space:pre;;transform:scaleX(0.942);transform-origin:50% 0">0,7</div>
<div class="b" style="position:absolute;left:524.5px;width:600px;text-align:center;top:320.59px;font-size:15.6px;line-height:15.6px;color:#000;font-weight:bold;font-style:italic;white-space:pre;;transform:scaleX(0.942);transform-origin:50% 0">10</div>
<div class="b" style="position:absolute;left:572.5px;width:600px;text-align:center;top:320.59px;font-size:15.6px;line-height:15.6px;color:#000;font-weight:bold;font-style:italic;white-space:pre;;transform:scaleX(0.942);transform-origin:50% 0">1100</div>
<div class="b" style="position:absolute;left:620.5px;width:600px;text-align:center;top:320.59px;font-size:15.6px;line-height:15.6px;color:#000;font-weight:bold;font-style:italic;white-space:pre;;transform:scaleX(0.942);transform-origin:50% 0">1650</div>
<div class="b" style="position:absolute;left:668.0px;width:600px;text-align:center;top:320.59px;font-size:15.6px;line-height:15.6px;color:#000;font-weight:bold;font-style:italic;white-space:pre;;transform:scaleX(0.942);transform-origin:50% 0">250</div>
<div class="b" style="position:absolute;left:715.5px;width:600px;text-align:center;top:320.59px;font-size:15.6px;line-height:15.6px;color:#000;font-weight:bold;font-style:italic;white-space:pre;;transform:scaleX(0.942);transform-origin:50% 0">12</div>
<div class="b" style="position:absolute;left:177.0px;width:600px;text-align:center;top:371.99px;font-size:15.6px;line-height:15.6px;color:#000;font-weight:bold;font-style:italic;white-space:pre;;transform:scaleX(0.942);transform-origin:50% 0">46</div>
<div class="b" style="position:absolute;left:228.5px;width:600px;text-align:center;top:371.99px;font-size:15.6px;line-height:15.6px;color:#000;font-weight:bold;font-style:italic;white-space:pre;;transform:scaleX(0.942);transform-origin:50% 0">47</div>
<div class="b" style="position:absolute;left:280.0px;width:600px;text-align:center;top:371.99px;font-size:15.6px;line-height:15.6px;color:#000;font-weight:bold;font-style:italic;white-space:pre;;transform:scaleX(0.942);transform-origin:50% 0">201</div>
<div class="b" style="position:absolute;left:331.5px;width:600px;text-align:center;top:371.99px;font-size:15.6px;line-height:15.6px;color:#000;font-weight:bold;font-style:italic;white-space:pre;;transform:scaleX(0.942);transform-origin:50% 0">1410</div>
<div class="b" style="position:absolute;left:381.5px;width:600px;text-align:center;top:371.99px;font-size:15.6px;line-height:15.6px;color:#000;font-weight:bold;font-style:italic;white-space:pre;;transform:scaleX(0.942);transform-origin:50% 0">36</div>
<div class="b" style="position:absolute;left:429.0px;width:600px;text-align:center;top:371.99px;font-size:15.6px;line-height:15.6px;color:#000;font-weight:bold;font-style:italic;white-space:pre;;transform:scaleX(0.942);transform-origin:50% 0">0,7</div>
<div class="b" style="position:absolute;left:476.5px;width:600px;text-align:center;top:371.99px;font-size:15.6px;line-height:15.6px;color:#000;font-weight:bold;font-style:italic;white-space:pre;;transform:scaleX(0.942);transform-origin:50% 0">0,42</div>
<div class="b" style="position:absolute;left:524.5px;width:600px;text-align:center;top:371.99px;font-size:15.6px;line-height:15.6px;color:#000;font-weight:bold;font-style:italic;white-space:pre;;transform:scaleX(0.942);transform-origin:50% 0">6</div>
<div class="b" style="position:absolute;left:572.5px;width:600px;text-align:center;top:371.99px;font-size:15.6px;line-height:15.6px;color:#000;font-weight:bold;font-style:italic;white-space:pre;;transform:scaleX(0.942);transform-origin:50% 0">660</div>
<div class="b" style="position:absolute;left:620.5px;width:600px;text-align:center;top:371.99px;font-size:15.6px;line-height:15.6px;color:#000;font-weight:bold;font-style:italic;white-space:pre;;transform:scaleX(0.942);transform-origin:50% 0">990</div>
<div class="b" style="position:absolute;left:668.0px;width:600px;text-align:center;top:371.99px;font-size:15.6px;line-height:15.6px;color:#000;font-weight:bold;font-style:italic;white-space:pre;;transform:scaleX(0.942);transform-origin:50% 0">150</div>
<div class="b" style="position:absolute;left:715.5px;width:600px;text-align:center;top:371.99px;font-size:15.6px;line-height:15.6px;color:#000;font-weight:bold;font-style:italic;white-space:pre;;transform:scaleX(0.942);transform-origin:50% 0">7</div>
<div class="b" style="position:absolute;left:177.0px;width:600px;text-align:center;top:423.29px;font-size:15.6px;line-height:15.6px;color:#000;font-weight:bold;font-style:italic;white-space:pre;;transform:scaleX(0.942);transform-origin:50% 0">49</div>
<div class="b" style="position:absolute;left:228.5px;width:600px;text-align:center;top:423.29px;font-size:15.6px;line-height:15.6px;color:#000;font-weight:bold;font-style:italic;white-space:pre;;transform:scaleX(0.942);transform-origin:50% 0">50</div>
<div class="b" style="position:absolute;left:280.0px;width:600px;text-align:center;top:423.29px;font-size:15.6px;line-height:15.6px;color:#000;font-weight:bold;font-style:italic;white-space:pre;;transform:scaleX(0.942);transform-origin:50% 0">211</div>
<div class="b" style="position:absolute;left:331.5px;width:600px;text-align:center;top:423.29px;font-size:15.6px;line-height:15.6px;color:#000;font-weight:bold;font-style:italic;white-space:pre;;transform:scaleX(0.942);transform-origin:50% 0">1481</div>
<div class="b" style="position:absolute;left:381.5px;width:600px;text-align:center;top:423.29px;font-size:15.6px;line-height:15.6px;color:#000;font-weight:bold;font-style:italic;white-space:pre;;transform:scaleX(0.942);transform-origin:50% 0">38</div>
<div class="b" style="position:absolute;left:429.0px;width:600px;text-align:center;top:423.29px;font-size:15.6px;line-height:15.6px;color:#000;font-weight:bold;font-style:italic;white-space:pre;;transform:scaleX(0.942);transform-origin:50% 0">0,8</div>
<div class="b" style="position:absolute;left:476.5px;width:600px;text-align:center;top:423.29px;font-size:15.6px;line-height:15.6px;color:#000;font-weight:bold;font-style:italic;white-space:pre;;transform:scaleX(0.942);transform-origin:50% 0">0,44</div>
<div class="b" style="position:absolute;left:524.5px;width:600px;text-align:center;top:423.29px;font-size:15.6px;line-height:15.6px;color:#000;font-weight:bold;font-style:italic;white-space:pre;;transform:scaleX(0.942);transform-origin:50% 0">6,3</div>
<div class="b" style="position:absolute;left:572.5px;width:600px;text-align:center;top:423.29px;font-size:15.6px;line-height:15.6px;color:#000;font-weight:bold;font-style:italic;white-space:pre;;transform:scaleX(0.942);transform-origin:50% 0">693</div>
<div class="b" style="position:absolute;left:620.5px;width:600px;text-align:center;top:423.29px;font-size:15.6px;line-height:15.6px;color:#000;font-weight:bold;font-style:italic;white-space:pre;;transform:scaleX(0.942);transform-origin:50% 0">1040</div>
<div class="b" style="position:absolute;left:668.0px;width:600px;text-align:center;top:423.29px;font-size:15.6px;line-height:15.6px;color:#000;font-weight:bold;font-style:italic;white-space:pre;;transform:scaleX(0.942);transform-origin:50% 0">158</div>
<div class="b" style="position:absolute;left:715.5px;width:600px;text-align:center;top:423.29px;font-size:15.6px;line-height:15.6px;color:#000;font-weight:bold;font-style:italic;white-space:pre;;transform:scaleX(0.942);transform-origin:50% 0">8</div>
<div class="b" style="position:absolute;left:177.0px;width:600px;text-align:center;top:465.09px;font-size:15.6px;line-height:15.6px;color:#000;font-weight:bold;font-style:italic;white-space:pre;;transform:scaleX(0.942);transform-origin:50% 0">44</div>
<div class="b" style="position:absolute;left:228.5px;width:600px;text-align:center;top:465.09px;font-size:15.6px;line-height:15.6px;color:#000;font-weight:bold;font-style:italic;white-space:pre;;transform:scaleX(0.942);transform-origin:50% 0">45</div>
<div class="b" style="position:absolute;left:280.0px;width:600px;text-align:center;top:465.09px;font-size:15.6px;line-height:15.6px;color:#000;font-weight:bold;font-style:italic;white-space:pre;;transform:scaleX(0.942);transform-origin:50% 0">191</div>
<div class="b" style="position:absolute;left:331.5px;width:600px;text-align:center;top:465.09px;font-size:15.6px;line-height:15.6px;color:#000;font-weight:bold;font-style:italic;white-space:pre;;transform:scaleX(0.942);transform-origin:50% 0">1340</div>
<div class="b" style="position:absolute;left:381.5px;width:600px;text-align:center;top:465.09px;font-size:15.6px;line-height:15.6px;color:#000;font-weight:bold;font-style:italic;white-space:pre;;transform:scaleX(0.942);transform-origin:50% 0">34</div>
<div class="b" style="position:absolute;left:429.0px;width:600px;text-align:center;top:465.09px;font-size:15.6px;line-height:15.6px;color:#000;font-weight:bold;font-style:italic;white-space:pre;;transform:scaleX(0.942);transform-origin:50% 0">0,7</div>
<div class="b" style="position:absolute;left:476.5px;width:600px;text-align:center;top:465.09px;font-size:15.6px;line-height:15.6px;color:#000;font-weight:bold;font-style:italic;white-space:pre;;transform:scaleX(0.942);transform-origin:50% 0">0,40</div>
<div class="b" style="position:absolute;left:524.5px;width:600px;text-align:center;top:465.09px;font-size:15.6px;line-height:15.6px;color:#000;font-weight:bold;font-style:italic;white-space:pre;;transform:scaleX(0.942);transform-origin:50% 0">5,7</div>
<div class="b" style="position:absolute;left:572.5px;width:600px;text-align:center;top:465.09px;font-size:15.6px;line-height:15.6px;color:#000;font-weight:bold;font-style:italic;white-space:pre;;transform:scaleX(0.942);transform-origin:50% 0">627</div>
<div class="b" style="position:absolute;left:620.5px;width:600px;text-align:center;top:465.09px;font-size:15.6px;line-height:15.6px;color:#000;font-weight:bold;font-style:italic;white-space:pre;;transform:scaleX(0.942);transform-origin:50% 0">941</div>
<div class="b" style="position:absolute;left:668.0px;width:600px;text-align:center;top:465.09px;font-size:15.6px;line-height:15.6px;color:#000;font-weight:bold;font-style:italic;white-space:pre;;transform:scaleX(0.942);transform-origin:50% 0">143</div>
<div class="b" style="position:absolute;left:715.5px;width:600px;text-align:center;top:465.09px;font-size:15.6px;line-height:15.6px;color:#000;font-weight:bold;font-style:italic;white-space:pre;;transform:scaleX(0.942);transform-origin:50% 0">7</div>
<div style="position:absolute;left:1260px;top:190px;width:20px;height:446px;background:#e6e6e6"></div>
<div style="position:absolute;left:1263px;top:205px;width:14px;height:431px;background:#d9d9d9"></div>
<div style="position:absolute;left:1259px;top:205px;width:1px;height:431px;background:#ababab"></div>
<div style="position:absolute;left:1263px;top:192px;width:14px;height:14px;background:#fff;border:1px solid #c6c6c6"></div>
<div style="position:absolute;left:1263px;top:622px;width:14px;height:14px;background:#fff;border:1px solid #c6c6c6"></div>
<div style="position:absolute;left:1263px;top:419px;width:14px;height:16px;background:#fff;border:1px solid #9b9b9b"></div>
<div style="position:absolute;left:0px;top:636px;width:1280px;height:26px;background:#e6e6e6"></div>
<div style="position:absolute;left:0px;top:636px;width:1260px;height:1px;background:#b4b4b4"></div>
<div style="position:absolute;left:94px;top:636px;width:58px;height:23px;background:#fff;border-left:1px solid #c6c6c6;border-right:1px solid #c6c6c6;border-bottom:2px solid #217346"></div>
<div class="b" style="position:absolute;left:-176.8px;width:600px;text-align:center;top:642.20px;font-size:13px;line-height:13px;color:#217346;font-weight:bold;font-style:normal;white-space:pre;;transform:scaleX(0.92);transform-origin:50% 0">Меню</div>
<div style="position:absolute;left:783px;top:643px;width:477px;height:13px;background:#fff;border:1px solid #b9b9b9"></div>
<div style="position:absolute;left:1221px;top:643px;width:25px;height:13px;background:#dcdcdc"></div>
<div style="position:absolute;left:1246px;top:643px;width:14px;height:13px;background:#fff;border:1px solid #b9b9b9"></div>
<div style="position:absolute;left:783px;top:643px;width:14px;height:13px;background:#fff;border:1px solid #b9b9b9"></div>
<div style="position:absolute;left:0px;top:662px;width:1280px;height:1px;background:#cacaca"></div>
<div style="position:absolute;left:0px;top:663px;width:1280px;height:19px;background:#f3f3f3"></div>
<div style="position:absolute;left:996px;top:662px;width:37px;height:20px;background:#c5c5c5"></div>
<div style="position:absolute;left:1126px;top:671px;width:94px;height:1px;background:#a6a6a6"></div>
<div style="position:absolute;left:1171px;top:667px;width:5px;height:10px;background:#6a6a6a"></div>
<div class="t" style="position:absolute;left:1245px;top:667.37px;font-size:11.5px;line-height:11.5px;color:#333;font-weight:normal;font-style:normal;white-space:pre;;transform:scaleX(0.76);transform-origin:0 0">100 %</div>
<div style="position:absolute;left:0px;top:682px;width:1280px;height:38px;background:linear-gradient(90deg,#234b5b 0%,#22475a 40%,#1d3152 80%,#1b2c4e 100%)"></div>
<div style="position:absolute;left:207px;top:683px;width:56px;height:37px;background:#3d4b53"></div>
<div style="position:absolute;left:154px;top:718px;width:48px;height:2px;background:#a8a8a8"></div>
<div style="position:absolute;left:207px;top:718px;width:57px;height:2px;background:#c8c8c8"></div>
<div class="t" style="position:absolute;left:899.7px;width:600px;text-align:center;top:688.16px;font-size:10.8px;line-height:10.8px;color:#fff;font-weight:normal;font-style:normal;white-space:pre;">10:08</div>
<div class="t" style="position:absolute;left:899.5px;width:600px;text-align:center;top:705.32px;font-size:11.2px;line-height:11.2px;color:#fff;font-weight:normal;font-style:normal;white-space:pre;;transform:scaleX(0.9);transform-origin:50% 0">26.08.2020</div>
<div class="t" style="position:absolute;left:1141.3px;top:697.21px;font-size:10.5px;line-height:10.5px;color:#fff;font-weight:normal;font-style:normal;white-space:pre;">РУС</div>
<svg style="left:20px;top:8px" width="15" height="15" viewBox="0 0 15 15"><path d="M1,1 H13 V13 H1 Z" fill="none" stroke="#fff" stroke-width="1.6"/><rect x="3.5" y="1" width="7" height="5.5" fill="none" stroke="#fff" stroke-width="1.4"/><rect x="3.5" y="9.5" width="7" height="3.5" fill="#fff"/><rect x="5.2" y="11" width="1.4" height="2" fill="#217346"/></svg>
<svg style="left:46px;top:8px" width="16" height="15" viewBox="0 0 16 15"><path d="M2.5,5 H9 A4.3,4.3 0 0 1 9,13.6 H7" fill="none" stroke="#fff" stroke-width="1.7"/><path d="M6,1.3 L2,5 L6,8.7" fill="none" stroke="#fff" stroke-width="1.7"/></svg>
<svg style="left:65px;top:13px" width="6" height="4" viewBox="0 0 6 4"><path d="M0,0 H5.5 L2.75,3.2 Z" fill="#fff"/></svg>
<svg style="left:80px;top:8px" width="16" height="15" viewBox="0 0 16 15"><path d="M13.5,5 H7 A4.3,4.3 0 0 0 7,13.6 H9" fill="none" stroke="rgba(255,255,255,0.35)" stroke-width="1.7"/><path d="M10,1.3 L14,5 L10,8.7" fill="none" stroke="rgba(255,255,255,0.35)" stroke-width="1.7"/></svg>
<svg style="left:98px;top:13px" width="6" height="4" viewBox="0 0 6 4"><path d="M0,0 H5.5 L2.75,3.2 Z" fill="rgba(255,255,255,0.35)"/></svg>
<svg style="left:115px;top:10px" width="10" height="10" viewBox="0 0 10 10"><path d="M0.5,1.8 H8.5" stroke="#fff" stroke-width="1.2"/><path d="M1,4.8 L4.5,8.3 L8,4.8" fill="none" stroke="#fff" stroke-width="1.2"/></svg>
<svg style="left:1122px;top:9px" width="14" height="11" viewBox="0 0 14 11"><rect x="0.6" y="0.6" width="12.4" height="9.2" fill="none" stroke="#fff" stroke-width="1.1"/><path d="M0.6,2.6 H13" stroke="#fff" stroke-width="1"/><path d="M6.8,9.5 V4.3 M4.6,6.3 L6.8,4.1 L9,6.3" fill="none" stroke="#fff" stroke-width="1.1"/></svg>
<svg style="left:1167px;top:14px" width="11" height="2" viewBox="0 0 11 2"><path d="M0,1 H10" stroke="#fff" stroke-width="1.1"/></svg>
<svg style="left:1209px;top:9px" width="12" height="11" viewBox="0 0 12 11"><rect x="0.6" y="2.6" width="7.6" height="7.6" fill="none" stroke="#fff" stroke-width="1.1"/><path d="M2.6,2.6 V0.6 H10.4 V8.2 H8.2" fill="none" stroke="#fff" stroke-width="1.1"/></svg>
<svg style="left:1253px;top:9px" width="11" height="11" viewBox="0 0 11 11"><path d="M0.6,0.6 L10.2,10.2 M10.2,0.6 L0.6,10.2" stroke="#fff" stroke-width="1.1"/></svg>
<svg style="left:690px;top:37px" width="15" height="18" viewBox="0 0 15 18"><path d="M5,11.5 C4.6,9.6 2.3,8.5 2.3,5.6 A5.2,5.2 0 0 1 12.7,5.6 C12.7,8.5 10.4,9.6 10,11.5 Z" fill="none" stroke="#d8ecdf" stroke-width="1.4"/><path d="M5.3,12.8 H9.7 M5.8,14.8 H9.2 M6.4,16.5 H8.6" stroke="#d8ecdf" stroke-width="1.3"/></svg>
<svg style="left:1178px;top:37px" width="16" height="18" viewBox="0 0 16 18"><circle cx="7.2" cy="6" r="4.1" fill="none" stroke="#d8ecdf" stroke-width="1.4"/><path d="M1.3,16.5 A6.5,6.5 0 0 1 7.2,10.4" fill="none" stroke="#d8ecdf" stroke-width="1.4"/><path d="M8.5,13.5 H15.5 M12,10 V17" stroke="#d8ecdf" stroke-width="1.3"/></svg>
<svg style="left:21px;top:68px" width="29" height="24" viewBox="0 0 29 24"><rect x="0" y="0" width="29" height="24" fill="#7a7a7a" rx="1"/><rect x="1.00" y="1.00" width="3.67" height="1.88" fill="#ffffff"/><rect x="1.00" y="3.88" width="3.67" height="1.88" fill="#ffffff"/><rect x="1.00" y="6.75" width="3.67" height="1.88" fill="#ffffff"/><rect x="1.00" y="9.62" width="3.67" height="1.88" fill="#ffffff"/><rect x="1.00" y="12.50" width="3.67" height="1.88" fill="#ffffff"/><rect x="1.00" y="15.38" width="3.67" height="1.88" fill="#ffffff"/><rect x="1.00" y="18.25" width="3.67" height="1.88" fill="#ffffff"/><rect x="1.00" y="21.12" width="3.67" height="1.88" fill="#ffffff"/><rect x="5.67" y="1.00" width="3.67" height="1.88" fill="#ffffff"/><rect x="5.67" y="3.88" width="3.67" height="1.88" fill="#ffffff"/><rect x="5.67" y="6.75" width="3.67" height="1.88" fill="#ffffff"/><rect x="5.67" y="9.62" width="3.67" height="1.88" fill="#ffffff"/><rect x="5.67" y="12.50" width="3.67" height="1.88" fill="#ffffff"/><rect x="5.67" y="15.38" width="3.67" height="1.88" fill="#ffffff"/><rect x="5.67" y="18.25" width="3.67" height="1.88" fill="#ffffff"/><rect x="5.67" y="21.12" width="3.67" height="1.88" fill="#ffffff"/><rect x="10.33" y="1.00" width="3.67" height="1.88" fill="#ffffff"/><rect x="10.33" y="3.88" width="3.67" height="1.88" fill="#ffffff"/><rect x="10.33" y="6.75" width="3.67" height="1.88" fill="#ffffff"/><rect x="10.33" y="9.62" width="3.67" height="1.88" fill="#ffffff"/><rect x="10.33" y="12.50" width="3.67" height="1.88" fill="#ffffff"/><rect x="10.33" y="15.38" width="3.67" height="1.88" fill="#ffffff"/><rect x="10.33" y="18.25" width="3.67" height="1.88" fill="#ffffff"/><rect x="10.33" y="21.12" width="3.67" height="1.88" fill="#ffffff"/><rect x="15.00" y="1.00" width="3.67" height="1.88" fill="#ffffff"/><rect x="15.00" y="3.88" width="3.67" height="1.88" fill="#ffffff"/><rect x="15.00" y="6.75" width="3.67" height="1.88" fill="#ffffff"/><rect x="15.00" y="9.62" width="3.67" height="1.88" fill="#ffffff"/><rect x="15.00" y="12.50" width="3.67" height="1.88" fill="#ffffff"/><rect x="15.00" y="15.38" width="3.67" height="1.88" fill="#ffffff"/><rect x="15.00" y="18.25" width="3.67" height="1.88" fill="#ffffff"/><rect x="15.00" y="21.12" width="3.67" height="1.88" fill="#ffffff"/><rect x="19.67" y="1.00" width="3.67" height="1.88" fill="#ffffff"/><rect x="19.67" y="3.88" width="3.67" height="1.88" fill="#ffffff"/><rect x="19.67" y="6.75" width="3.67" height="1.88" fill="#ffffff"/><rect x="19.67" y="9.62" width="3.67" height="1.88" fill="#ffffff"/><rect x="19.67" y="12.50" width="3.67" height="1.88" fill="#ffffff"/><rect x="19.67" y="15.38" width="3.67" height="1.88" fill="#ffffff"/><rect x="19.67" y="18.25" width="3.67" height="1.88" fill="#ffffff"/><rect x="19.67" y="21.12" width="3.67" height="1.88" fill="#ffffff"/><rect x="24.33" y="1.00" width="3.67" height="1.88" fill="#ffffff"/><rect x="24.33" y="3.88" width="3.67" height="1.88" fill="#ffffff"/><rect x="24.33" y="6.75" width="3.67" height="1.88" fill="#ffffff"/><rect x="24.33" y="9.62" width="3.67" height="1.88" fill="#ffffff"/><rect x="24.33" y="12.50" width="3.67" height="1.88" fill="#ffffff"/><rect x="24.33" y="15.38" width="3.67" height="1.88" fill="#ffffff"/><rect x="24.33" y="18.25" width="3.67" height="1.88" fill="#ffffff"/><rect x="24.33" y="21.12" width="3.67" height="1.88" fill="#ffffff"/></svg>
<svg style="left:85px;top:68px" width="27" height="24" viewBox="0 0 27 24"><rect x="0.75" y="0.75" width="25.5" height="22.5" fill="#fff" stroke="#7a7a7a" stroke-width="1.5" rx="1"/><path d="M5.2,1.5 V22.5" stroke="#c9daf0" stroke-width="1"/><path d="M9.4,1.5 V22.5" stroke="#c9daf0" stroke-width="1"/><path d="M13.6,1.5 V22.5" stroke="#c9daf0" stroke-width="1"/><path d="M17.8,1.5 V22.5" stroke="#c9daf0" stroke-width="1"/><path d="M22.0,1.5 V22.5" stroke="#c9daf0" stroke-width="1"/><path d="M1.5,3.9 H25.5" stroke="#c9daf0" stroke-width="1"/><path d="M1.5,6.7 H25.5" stroke="#c9daf0" stroke-width="1"/><path d="M1.5,9.6 H25.5" stroke="#c9daf0" stroke-width="1"/><path d="M1.5,12.4 H25.5" stroke="#c9daf0" stroke-width="1"/><path d="M1.5,15.2 H25.5" stroke="#c9daf0" stroke-width="1"/><path d="M1.5,18.1 H25.5" stroke="#c9daf0" stroke-width="1"/><path d="M1.5,20.9 H25.5" stroke="#c9daf0" stroke-width="1"/><path d="M15.5,1 V23" stroke="#555" stroke-width="1.1" stroke-dasharray="2 1.2"/><path d="M1,17.5 H26" stroke="#555" stroke-width="1.1" stroke-dasharray="2 1.2"/></svg>
<svg style="left:138px;top:73px" width="12" height="15" viewBox="0 0 12 15"><path d="M0.7,0.7 H7.5 L11.2,4.4 V13.3 H0.7 Z" fill="#fff" stroke="#6d6d6d" stroke-width="1.2"/><path d="M7.5,0.7 V4.4 H11.2" fill="none" stroke="#6d6d6d" stroke-width="1"/><rect x="3" y="6" width="6" height="5" fill="none" stroke="#b8b8b8" stroke-width="0.8"/><path d="M6,6 V11 M3,8.5 H9" stroke="#b8b8b8" stroke-width="0.8"/></svg>
<svg style="left:136px;top:102px" width="17" height="16" viewBox="0 0 17 16"><rect x="3.5" y="3" width="10" height="10" fill="none" stroke="#6d6d6d" stroke-width="1.2"/><rect x="5.5" y="5" width="6" height="6" fill="#e8eef6" stroke="#8a8a8a" stroke-width="0.9"/><path d="M4,0.8 H13 M0.8,4 V12 M15.5,2 V15 H4" fill="none" stroke="#6d6d6d" stroke-width="1"/></svg>
<svg style="left:279px;top:74px" width="13" height="13" viewBox="0 0 13 13"><rect x="0.6" y="0.6" width="11.8" height="11.8" fill="#fff" stroke="#c8c8c8" stroke-width="1.2"/><path d="M2.8,6.5 L5.2,9 L10.2,3.3" fill="none" stroke="#c8c8c8" stroke-width="1.2"/></svg>
<svg style="left:349px;top:74px" width="13" height="13" viewBox="0 0 13 13"><rect x="0.6" y="0.6" width="11.8" height="11.8" fill="#fff" stroke="#6d6d6d" stroke-width="1.2"/><path d="M2.8,6.5 L5.2,9 L10.2,3.3" fill="none" stroke="#444" stroke-width="1.2"/></svg>
<svg style="left:279px;top:103px" width="13" height="13" viewBox="0 0 13 13"><rect x="0.6" y="0.6" width="11.8" height="11.8" fill="#fff" stroke="#6d6d6d" stroke-width="1.2"/><path d="M2.8,6.5 L5.2,9 L10.2,3.3" fill="none" stroke="#444" stroke-width="1.2"/></svg>
<svg style="left:349px;top:103px" width="13" height="13" viewBox="0 0 13 13"><rect x="0.6" y="0.6" width="11.8" height="11.8" fill="#fff" stroke="#6d6d6d" stroke-width="1.2"/><path d="M2.8,6.5 L5.2,9 L10.2,3.3" fill="none" stroke="#444" stroke-width="1.2"/></svg>
<svg style="left:481px;top:66px" width="28" height="28" viewBox="0 0 28 28"><circle cx="10.7" cy="10.6" r="8.6" fill="#fff" stroke="#767676" stroke-width="2.2"/><path d="M16.8,16.8 L25.3,25.5" stroke="#767676" stroke-width="3.2" stroke-linecap="round"/></svg>
<svg style="left:529px;top:66px" width="28" height="30" viewBox="0 0 28 30"><path d="M1.2,1 H13.4 L20,7.8 V25.8 H1.2 Z" fill="#fff" stroke="#7a7a7a" stroke-width="1.3"/><path d="M13.4,1 V7.8 H20" fill="none" stroke="#7a7a7a" stroke-width="1"/><path d="M14,0.8 H25.2 V21" fill="none" stroke="#8a8a8a" stroke-width="1" stroke-dasharray="1.3 1.3"/><path d="M14,13.4 H23.5 M19.5,9.4 L23.6,13.4 L19.5,17.4" fill="none" stroke="#3c76b4" stroke-width="1.8"/><rect x="12.8" y="21.3" width="13" height="8" fill="#3f78b5"/><text x="19.3" y="28.3" font-family="Liberation Sans" font-size="7" font-weight="bold" fill="#fff" text-anchor="middle">100</text></svg>
<svg style="left:586px;top:68px" width="28" height="28" viewBox="0 0 28 28"><rect x="0.7" y="0.7" width="25.6" height="23" fill="#fff" stroke="#8a8a8a" stroke-width="1.2"/><path d="M6.5,1 V6 M0.5,18 V23" stroke="#b0b0b0" stroke-width="1"/><path d="M13,1 V6 M7,18 V23" stroke="#b0b0b0" stroke-width="1"/><path d="M19.5,1 V6 M13.5,18 V23" stroke="#b0b0b0" stroke-width="1"/><path d="M1,6 H26 M1,12 H8 M1,18 H8" stroke="#b0b0b0" stroke-width="1"/><circle cx="15.5" cy="13" r="7.2" fill="#fff" stroke="#767676" stroke-width="2"/><path d="M9.8,13 A5.7,5.7 0 0 1 21.2,13 Z" fill="#c5d5ea"/><path d="M20.5,18.5 L26.5,25.5" stroke="#767676" stroke-width="2.8" stroke-linecap="round"/></svg>
<svg style="left:655px;top:65px" width="17" height="16" viewBox="0 0 17 16"><rect x="5.5" y="0.5" width="10" height="6" fill="#fff" stroke="#6d6d6d" stroke-width="1"/><rect x="5.5" y="0.5" width="10" height="2" fill="#6d6d6d"/><rect x="0.5" y="4.5" width="10" height="6" fill="#fff" stroke="#6d6d6d" stroke-width="1"/><rect x="0.5" y="4.5" width="10" height="2" fill="#6d6d6d"/><rect x="6" y="8" width="9.5" height="7" fill="#fff" stroke="#6d6d6d" stroke-width="1"/><rect x="6" y="8" width="9.5" height="2.2" fill="#3f78b5"/></svg>
<svg style="left:656px;top:86px" width="14" height="16" viewBox="0 0 14 16"><rect x="0.7" y="0.7" width="12.3" height="14" fill="#fff" stroke="#6d6d6d" stroke-width="1.2"/><rect x="0.7" y="0.7" width="12.3" height="2.6" fill="#3f78b5"/><rect x="0.7" y="7.5" width="12.3" height="2.6" fill="#3f78b5"/></svg>
<svg style="left:656px;top:109px" width="16" height="15" viewBox="0 0 16 15"><rect x="0.6" y="0.6" width="14.3" height="13" fill="#fff" stroke="#6d6d6d" stroke-width="1.2"/><path d="M5,0.6 V13.6 M10,0.6 V13.6 M0.6,4.7 H15 M0.6,9 H15" stroke="#aabbd6" stroke-width="1" stroke-dasharray="1 1"/><rect x="5" y="4.7" width="5" height="4.3" fill="#3f78b5"/><path d="M0.6,11 H15" stroke="#6d6d6d" stroke-width="1"/></svg>
<svg style="left:775px;top:115px" width="6" height="4" viewBox="0 0 6 4"><path d="M0,0 H5 L2.5,3 Z" fill="#6d6d6d"/></svg>
<svg style="left:788px;top:67px" width="16" height="13" viewBox="0 0 16 13"><rect x="0.6" y="0.6" width="14.3" height="11.3" fill="#fff" stroke="#6d6d6d" stroke-width="1.2"/><rect x="0.6" y="0.6" width="14.3" height="2.3" fill="#3f78b5"/><path d="M2.5,6.5 H13" stroke="#6d6d6d" stroke-width="1" stroke-dasharray="1.2 1"/></svg>
<svg style="left:788px;top:87px" width="17" height="15" viewBox="0 0 17 15"><path d="M1,2 V13.8 H15.5 V2" fill="#fff" stroke="#6d6d6d" stroke-width="1" stroke-dasharray="1.2 1"/><rect x="0.6" y="0.6" width="15.3" height="2.6" fill="#3f78b5"/></svg>
<svg style="left:788px;top:109px" width="17" height="15" viewBox="0 0 17 15"><rect x="0.6" y="0.6" width="15" height="13" fill="#f8f8f8" stroke="#c8c8c8" stroke-width="1.2"/><rect x="0.6" y="0.6" width="15" height="2.4" fill="#cfcfcf"/></svg>
<svg style="left:884px;top:67px" width="17" height="12" viewBox="0 0 17 12"><path d="M0.6,0.6 H5.5 L7.4,2.5 V11.2 H0.6 Z M8.4,0.6 H13.5 L15.6,2.5 V11.2 H8.4 Z" fill="#f6f6f6" stroke="#c2c2c2" stroke-width="1.1"/></svg>
<svg style="left:884px;top:87px" width="17" height="16" viewBox="0 0 17 16"><path d="M0.7,1 V14 M3.5,2 H9 L11.5,4.5 V13 H3.5 Z" fill="#f6f6f6" stroke="#c2c2c2" stroke-width="1.1" stroke-dasharray=""/><path d="M5,7 H10 M5,9.5 H10" stroke="#c2c2c2" stroke-width="0.9"/><path d="M14.5,1 V15 M13,2.5 L14.5,1 L16,2.5 M13,13.5 L14.5,15 L16,13.5" fill="none" stroke="#c2c2c2" stroke-width="1"/></svg>
<svg style="left:884px;top:111px" width="17" height="12" viewBox="0 0 17 12"><path d="M0.6,0.6 H5.5 L7.4,2.5 V11.2 H0.6 Z M8.4,0.6 H13.5 L15.6,2.5 V11.2 H8.4 Z" fill="#f6f6f6" stroke="#c2c2c2" stroke-width="1.1"/><path d="M2,6.5 H6 M4.5,5 L6,6.5 L4.5,8 M14,6.5 H10 M11.5,5 L10,6.5 L11.5,8" fill="none" stroke="#c2c2c2" stroke-width="0.9"/></svg>
<svg style="left:933px;top:67px" width="30" height="25" viewBox="0 0 30 25"><rect x="1" y="1" width="13" height="10" fill="#fff" stroke="#7a7a7a" stroke-width="1.2"/><rect x="1" y="1" width="13" height="1.8" fill="#7a7a7a"/><rect x="15.5" y="1" width="13" height="10" fill="#fff" stroke="#7a7a7a" stroke-width="1.2"/><rect x="15.5" y="1" width="13" height="1.8" fill="#7a7a7a"/><rect x="1" y="13.5" width="13" height="10" fill="#fff" stroke="#7a7a7a" stroke-width="1.2"/><rect x="1" y="13.5" width="13" height="1.8" fill="#7a7a7a"/><rect x="12" y="9" width="13" height="10.5" fill="#fff" stroke="#7a7a7a" stroke-width="1.2"/><rect x="12" y="9" width="13" height="2.2" fill="#3f78b5"/></svg>
<svg style="left:979px;top:119px" width="6" height="4" viewBox="0 0 6 4"><path d="M0,0 H5 L2.5,3 Z" fill="#6d6d6d"/></svg>
<svg style="left:1012px;top:67px" width="32" height="28" viewBox="0 0 32 28"><rect x="0.8" y="0.8" width="24.2" height="20.8" fill="#fff" stroke="#7a7a7a" stroke-width="1.3"/><rect x="0.8" y="0.8" width="24.2" height="3.6" fill="#7a7a7a"/><path d="M3.5,7.8 H8 M10,7.8 H15 M17,7.8 H22 M3.5,11.5 H8 M10,11.5 H15 M17,11.5 H22 M3.5,15 H8 M10,15 H15 M3.5,18.5 H8 M10,18.5 H15" stroke="#b0b0b0" stroke-width="1"/><path d="M18,14.5 H28.5 A1.5,1.5 0 0 1 28.5,17.5 H27 V24 A2.5,2.5 0 0 1 24.5,26.5 H16 A2,2 0 0 1 16,22.5 H18 Z" fill="#fff" stroke="#e0782c" stroke-width="1.6"/><path d="M15,24.5 H24" stroke="#e0782c" stroke-width="2.5"/></svg>
<svg style="left:1025px;top:119px" width="6" height="4" viewBox="0 0 6 4"><path d="M0,0 H5 L2.5,3 Z" fill="#6d6d6d"/></svg>
<svg style="left:1262px;top:138px" width="10" height="6" viewBox="0 0 10 6"><path d="M0.8,5 L4.8,1 L8.8,5" fill="none" stroke="#555" stroke-width="1.1"/></svg>
<svg style="left:86px;top:165px" width="8" height="5" viewBox="0 0 8 5"><path d="M0.5,0.5 H7.5 L4,4.5 Z" fill="#555"/></svg>
<svg style="left:112px;top:163px" width="4" height="12" viewBox="0 0 4 12"><circle cx="2" cy="1.5" r="1" fill="#888"/><circle cx="2" cy="5.3" r="1" fill="#888"/><circle cx="2" cy="9.2" r="1" fill="#888"/></svg>
<svg style="left:140px;top:163px" width="12" height="12" viewBox="0 0 12 12"><path d="M1,1.5 L10.5,10.5 M10.5,1.5 L1,10.5" stroke="#b3b3b3" stroke-width="1.2"/></svg>
<svg style="left:173px;top:163px" width="15" height="12" viewBox="0 0 15 12"><path d="M1,6 L5,10.5 L13.5,1" fill="none" stroke="#bdbdbd" stroke-width="1.6"/></svg>
<div style="position:absolute;left:207px;top:159px;font-family:'Liberation Serif',serif;font-style:italic;font-weight:bold;font-size:14px;color:#555;line-height:16px">f<span style="font-size:10px">x</span></div>
<svg style="left:1263px;top:165px" width="10" height="7" viewBox="0 0 10 7"><path d="M1,1 L4.8,4.8 L8.6,1" fill="none" stroke="#555" stroke-width="1.6"/></svg>
<svg style="left:1266px;top:197px" width="8" height="5" viewBox="0 0 8 5"><path d="M0,4.5 H8 L4,0.5 Z" fill="#555"/></svg>
<svg style="left:1266px;top:627px" width="8" height="5" viewBox="0 0 8 5"><path d="M0,0.5 H8 L4,4.5 Z" fill="#555"/></svg>
<svg style="left:12px;top:193px" width="10" height="10" viewBox="0 0 10 10"><path d="M9,1 V9 H1 Z" fill="#b8b8b8"/></svg>
<svg style="left:24px;top:644px" width="6" height="9" viewBox="0 0 6 9"><path d="M5,0.5 V8.5 L0.5,4.5 Z" fill="#c0c0c0"/></svg>
<svg style="left:52px;top:644px" width="6" height="9" viewBox="0 0 6 9"><path d="M0.5,0.5 V8.5 L5,4.5 Z" fill="#c0c0c0"/></svg>
<svg style="left:182px;top:640px" width="17" height="17" viewBox="0 0 17 17"><circle cx="8" cy="8.4" r="7" fill="none" stroke="#6a6a6a" stroke-width="1.2"/><path d="M8,4.3 V12.5 M3.9,8.4 H12.1" stroke="#6a6a6a" stroke-width="1.5"/></svg>
<svg style="left:766px;top:641px" width="4" height="14" viewBox="0 0 4 14"><circle cx="2" cy="2" r="1" fill="#999"/><circle cx="2" cy="6.5" r="1" fill="#999"/><circle cx="2" cy="11" r="1" fill="#999"/></svg>
<svg style="left:787px;top:645px" width="6" height="9" viewBox="0 0 6 9"><path d="M5,0.5 V8.5 L0.5,4.5 Z" fill="#444"/></svg>
<svg style="left:1251px;top:645px" width="6" height="9" viewBox="0 0 6 9"><path d="M0.5,0.5 V8.5 L5,4.5 Z" fill="#444"/></svg>
<svg style="left:1008px;top:665px" width="14" height="14" viewBox="0 0 14 14"><rect x="0.5" y="0.5" width="12.5" height="12.5" fill="none" stroke="#6a6a6a" stroke-width="1"/><path d="M3.6,0.5 V13 M6.75,0.5 V13 M9.9,0.5 V13 M0.5,3.6 H13 M0.5,6.75 H13 M0.5,9.9 H13" stroke="#6a6a6a" stroke-width="1"/></svg>
<svg style="left:1045px;top:665px" width="15" height="14" viewBox="0 0 15 14"><rect x="0.6" y="0.6" width="13" height="12.4" fill="none" stroke="#6a6a6a" stroke-width="1.2"/><rect x="3.5" y="2.8" width="7.2" height="8" fill="none" stroke="#6a6a6a" stroke-width="1"/><path d="M5,5 H9 M5,7 H9 M5,9 H9" stroke="#6a6a6a" stroke-width="0.8"/></svg>
<svg style="left:1082px;top:665px" width="15" height="14" viewBox="0 0 15 14"><path d="M0.6,0.6 H13.6 V13 H0.6 Z M5,0.6 V6.5 M9,0.6 V6.5 H13.6 M0.6,6.5 H5" fill="none" stroke="#6a6a6a" stroke-width="1.2"/></svg>
<svg style="left:1113px;top:670px" width="9" height="3" viewBox="0 0 9 3"><path d="M0,1.5 H8" stroke="#444" stroke-width="1.3"/></svg>
<svg style="left:1224px;top:667px" width="9" height="9" viewBox="0 0 9 9"><path d="M0,4.5 H8.5 M4.25,0.2 V8.8" stroke="#444" stroke-width="1.3"/></svg>
<svg style="left:10px;top:689px" width="25" height="24" viewBox="0 0 25 24"><path d="M1,3.5 L9.6,2.3 V10.5 H1 Z M10.8,2.1 L24,0.3 V10.5 H10.8 Z M1,11.8 H9.6 V20.2 L1,19 Z M10.8,11.8 H24 V22.8 L10.8,20.6 Z" fill="#fff"/></svg>
<svg style="left:59px;top:693px" width="17" height="16" viewBox="0 0 17 16"><rect x="1" y="2.3" width="9.5" height="10" fill="none" stroke="#fff" stroke-width="1.1"/><rect x="1" y="2.3" width="9.5" height="2" fill="#a9b6bd"/><path d="M0.3,0.5 H11.3 M0.3,14.5 H11.3 M14.5,0 V15 M13.3,5 H15.7 V8.5 H13.3 Z" fill="none" stroke="#fff" stroke-width="1.1"/></svg>
<svg style="left:107px;top:689px" width="28" height="24" viewBox="0 0 28 24"><path d="M1,3 H9 L11,5 H27 V23 H1 Z" fill="#f8d775"/><path d="M1,1 H9 L11,3 H27 V6 H1 Z" fill="#e8a90e"/><path d="M7.5,23.5 V13 H20.5 V23.5 H17 V17 H11 V23.5 Z" fill="#3f8fd6"/></svg>
<svg style="left:164px;top:687px" width="28" height="28" viewBox="0 0 28 28"><circle cx="14" cy="14" r="13.2" fill="#7ea5ef"/><path d="M14,14 L2.6,7.4 A13.2,13.2 0 0 1 25.4,7.4 Z" fill="#3d6fd9"/><path d="M14,14 L25.4,7.4 A13.2,13.2 0 0 1 14,27.2 Z" fill="#a9c3f6"/><circle cx="14" cy="14" r="6.3" fill="#fff"/><circle cx="14" cy="14" r="4.8" fill="#4b84ee"/></svg>
<svg style="left:220px;top:687px" width="31" height="27" viewBox="0 0 31 27"><rect x="7.5" y="0.5" width="23" height="26" fill="#185c37"/><rect x="7.5" y="0.5" width="23" height="6.5" fill="#21a366"/><rect x="19" y="0.5" width="11.5" height="6.5" fill="#33c481"/><rect x="7.5" y="7" width="23" height="6.5" fill="#107c41"/><rect x="19" y="7" width="11.5" height="6.5" fill="#21a366"/><rect x="7.5" y="13.5" width="23" height="6.5" fill="#185c37"/><rect x="19" y="13.5" width="11.5" height="6.5" fill="#107c41"/><rect x="0" y="7" width="15.5" height="15" fill="#107c41"/><path d="M4,10.5 L11.5,19 M11.5,10.5 L4,19" stroke="#fff" stroke-width="2.3"/></svg>
<svg style="left:958px;top:693px" width="16" height="16" viewBox="0 0 16 16"><circle cx="8" cy="8" r="7.3" fill="#6c97e6"/><circle cx="8" cy="8" r="3.6" fill="none" stroke="#c6d7f7" stroke-width="1.3"/></svg>
<svg style="left:980px;top:693px" width="16" height="16" viewBox="0 0 16 16"><path d="M0.5,6 H5 L6.5,7.5 H12 V15.5 H0.5 Z" fill="#e8cf6f"/><rect x="8" y="0.5" width="7" height="8" fill="#fff"/><path d="M11.5,2 V2.8 M11.5,3.8 V7.3" stroke="#1d3fa0" stroke-width="1.4"/><path d="M3,14 L6,10 L9,14" fill="none" stroke="#333" stroke-width="1"/></svg>
<svg style="left:1003px;top:693px" width="16" height="16" viewBox="0 0 16 16"><circle cx="8" cy="8" r="7.5" fill="#6b9ad6"/><text x="8" y="10.3" font-family="Liberation Sans" font-size="6.2" font-weight="bold" fill="#fff" text-anchor="middle">WPS</text></svg>
<svg style="left:1025px;top:693px" width="16" height="16" viewBox="0 0 16 16"><rect x="0.5" y="0.5" width="15" height="15" fill="#5fb0d8"/><path d="M0.5,9 L0.5,15.5 H8 Z" fill="#cfc27a"/><rect x="3" y="3" width="9" height="6" fill="none" stroke="#1d4f86" stroke-width="1"/><path d="M4,5 H11 M4,7 H9 M9,11 H14 M10,13 H14" stroke="#e7f5fb" stroke-width="1"/></svg>
<svg style="left:1050px;top:693px" width="13" height="17" viewBox="0 0 13 17"><ellipse cx="6.5" cy="8.5" rx="6.2" ry="8" fill="#1f7be0"/><path d="M3.6,5.4 L9.2,10.8 L6.4,13.4 V3.6 L9.2,6.2 L3.6,11.6" fill="none" stroke="#fff" stroke-width="1.1"/></svg>
<svg style="left:1071px;top:697px" width="16" height="10" viewBox="0 0 16 10"><rect x="0.7" y="0.7" width="13" height="8.6" fill="none" stroke="#fff" stroke-width="1.3"/><rect x="2.5" y="2.5" width="6" height="5" fill="#fff"/><rect x="14" y="3" width="1.6" height="4" fill="#fff"/></svg>
<svg style="left:1095px;top:696px" width="14" height="12" viewBox="0 0 14 12"><path d="M1.5,11 A9.5,9.5 0 0 1 11,1.5 M4,11 A7,7 0 0 1 11,4 M6.5,11 A4.5,4.5 0 0 1 11,6.5" fill="none" stroke="#fff" stroke-width="1.1"/><circle cx="11" cy="11" r="1.3" fill="#fff"/></svg>
<svg style="left:1115px;top:694px" width="17" height="15" viewBox="0 0 17 15"><path d="M0.7,4.8 H4 L8.3,1 V14 L4,10.2 H0.7 Z" fill="none" stroke="#fff" stroke-width="1.1"/><path d="M10.5,4.8 A3.5,3.5 0 0 1 10.5,10.2 M12.6,2.8 A6,6 0 0 1 12.6,12.2 M14.7,1 A8.5,8.5 0 0 1 14.7,14" fill="none" stroke="#fff" stroke-width="1.1"/></svg>
<svg style="left:1241px;top:693px" width="18" height="17" viewBox="0 0 18 17"><path d="M0.9,0.9 H15.6 V12.6 H10.3 L8.25,14.9 L6.2,12.6 H0.9 Z" fill="none" stroke="#f2f4f8" stroke-width="1.3"/></svg>
<div style="position:absolute;left:1275px;top:683px;width:1px;height:37px;background:#52607a"></div>
</body></html>
